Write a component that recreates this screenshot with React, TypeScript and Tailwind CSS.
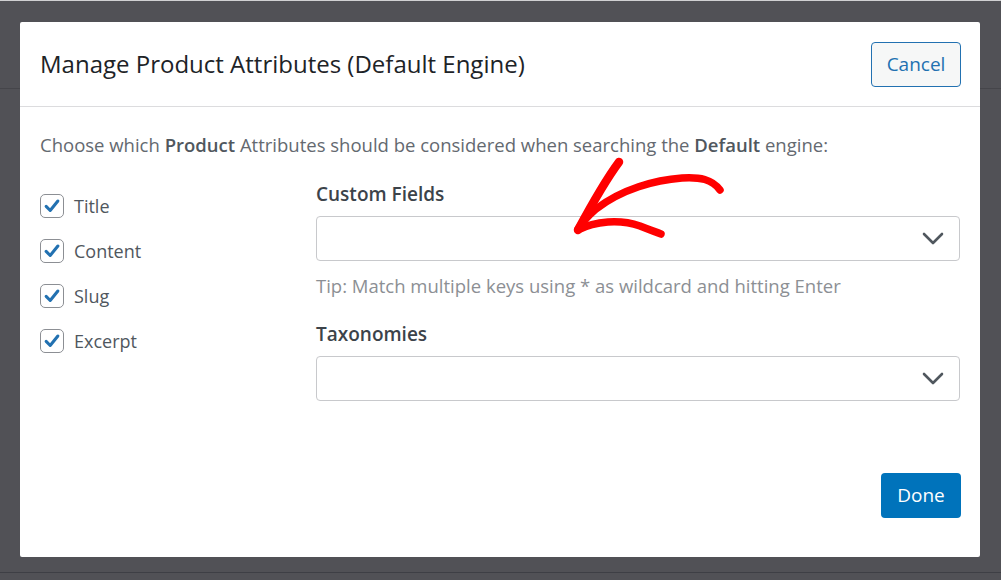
import React from 'react';

// ---------- Checkbox (ติ๊กไว้ทั้งหมด) ----------
const CheckRow: React.FC<{ label: string }> = ({ label }) => (
  <label className="flex h-[45px] items-center gap-[10px]">
    <span className="flex h-[24px] w-[24px] items-center justify-center rounded-[5px] border border-[#8c8f94] bg-white">
      <svg width="18" height="18" viewBox="0 0 20 20">
        <path
          d="M3.5 10.5 L8 15 L16.5 4.5"
          fill="none"
          stroke="#2271b1"
          strokeWidth="3.4"
          strokeLinecap="round"
          strokeLinejoin="round"
        />
      </svg>
    </span>
    <span className="text-[18px] leading-[26px] text-[#50575e]">{label}</span>
  </label>
);

const Chevron = () => (
  <svg width="22" height="13" viewBox="0 0 22 13">
    <path
      d="M2 2 L11 11 L20 2"
      fill="none"
      stroke="#50575e"
      strokeWidth="2.6"
      strokeLinecap="round"
      strokeLinejoin="round"
    />
  </svg>
);

const SelectBox = () => (
  <div className="flex h-[45px] items-center justify-end rounded-[4px] border border-[#c8c9cc] bg-white pr-[15px]">
    <Chevron />
  </div>
);

// ---------- ลูกศรแดงวาดมือ ----------
const RedArrow = () => (
  <svg
    className="pointer-events-none absolute left-0 top-0"
    width="1001"
    height="580"
    viewBox="0 0 1001 580"
  >
    <g fill="none" stroke="#ff0000" strokeLinecap="round" strokeLinejoin="round">
      <path d="M720 189 C 712 178, 700 176, 682 177 C 655 179, 622 188, 596 208 C 588 215, 582 222, 578 228" strokeWidth="7.5" />
      <path d="M619 161 C 605 180, 592 203, 578 229" strokeWidth="8.5" />
      <path d="M578 229 C 595 220, 620 218, 640 225 C 650 229, 656 231, 661 233" strokeWidth="7.5" />
    </g>
  </svg>
);

export default function App() {
  return (
    <div
      className="relative h-[580px] w-[1001px] overflow-hidden border-t border-[#d0d0d2] bg-[#515156] pl-[20px] pt-[21px]"
      style={{ fontFamily: '"Open Sans", "Noto Sans", sans-serif' }}
    >
      {/* เส้นพื้นหลังจาง ๆ */}
      <div className="absolute left-0 top-[87px] h-px w-full bg-[#45454a]" />
      <div className="absolute left-0 top-[571px] h-px w-full bg-[#3e3f45]" />

      {/* Modal */}
      <div className="relative flex h-[535px] w-[960px] flex-col rounded-[2px] bg-white">
        <div className="flex h-[85px] items-center justify-between border-b border-[#dcdcde] pl-[20px] pr-[19px]">
          <h1 className="text-[24px] leading-[30px] text-[#1d2327]">
            Manage Product Attributes (Default Engine)
          </h1>
          <button className="h-[45px] w-[90px] rounded-[4px] border border-[#2271b1] bg-[#f6f7f7] text-[19px] text-[#2271b1]">
            Cancel
          </button>
        </div>

        <div className="flex-1 px-[20px] pt-[25px]">
          <p className="text-[18.5px] leading-[26px] text-[#646970]">
            Choose which <b className="font-semibold text-[#50575e]">Product</b> Attributes should be
            considered when searching the <b className="font-semibold text-[#50575e]">Default</b> engine:
          </p>

          <div className="mt-[23px] flex">
            <div className="w-[276px] pt-[2px]">
              <CheckRow label="Title" />
              <CheckRow label="Content" />
              <CheckRow label="Slug" />
              <CheckRow label="Excerpt" />
            </div>

            <div className="flex-1">
              <div className="mb-[9px] text-[19px] font-semibold leading-[26px] text-[#3c434a]">
                Custom Fields
              </div>
              <SelectBox />
              <div className="mt-[13px] text-[18.5px] leading-[24px] text-[#8c8f94]">
                Tip: Match multiple keys using * as wildcard and hitting Enter
              </div>
              <div className="mb-[9px] mt-[23px] text-[19px] font-semibold leading-[26px] text-[#3c434a]">
                Taxonomies
              </div>
              <SelectBox />
            </div>
          </div>
        </div>

        <div className="flex justify-end pb-[39px] pr-[19px]">
          <button className="h-[45px] w-[80px] rounded-[4px] bg-[#0073bb] text-[19px] text-white">
            Done
          </button>
        </div>
      </div>

      <RedArrow />
    </div>
  );
}
